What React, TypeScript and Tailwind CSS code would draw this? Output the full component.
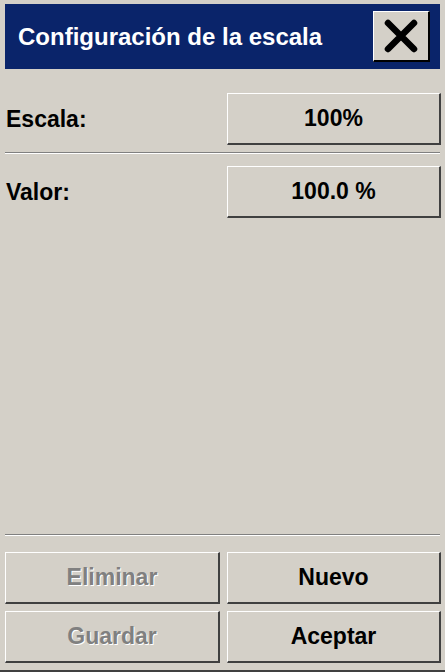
import React from "react";

function Btn({ label, disabled }: { label: string; disabled?: boolean }) {
  return (
    <button
      className={
        "h-[52px] w-full bg-[#d4d0c8] border-t border-l border-white border-b-2 border-r-2 border-b-[#404040] border-r-[#404040] text-[23px] font-bold " +
        (disabled ? "text-[#808080] [text-shadow:1px_1px_0_#ffffff]" : "text-black")
      }
    >
      {label}
    </button>
  );
}

function Separator() {
  return (
    <div className="mx-[5px] flex flex-col">
      <div className="h-px bg-[#808080]" />
      <div className="h-px bg-white" />
    </div>
  );
}

export default function App() {
  return (
    <div
      className="w-[445px] h-[672px] bg-[#d4d0c8] flex flex-col overflow-hidden"
      style={{ fontFamily: '"Liberation Sans", Arial, sans-serif' }}
    >
      {/* Title bar */}
      <div className="mt-[4px] mx-[5px] h-[65px] bg-[#0a246a] flex items-center justify-between pl-[13px] pr-[10px]">
        <span className="text-white text-[24px] font-bold">Configuración de la escala</span>
        <button className="w-[57px] h-[51px] bg-[#d4d0c8] border-t border-l border-white border-b-2 border-r-2 border-b-black border-r-black flex items-center justify-center">
          <svg width="36" height="36" viewBox="0 0 36 36">
            <path d="M5 5 L31 31 M31 5 L5 31" stroke="#000" strokeWidth="6.5" strokeLinecap="round" fill="none" />
          </svg>
        </button>
      </div>

      {/* Escala */}
      <div className="mt-[24px] flex items-center pl-[6px] pr-[4px]">
        <span className="flex-1 text-[23px] font-bold text-black">Escala:</span>
        <div className="w-[214px]">
          <Btn label="100%" />
        </div>
      </div>

      <div className="mt-[7px]">
        <Separator />
      </div>

      {/* Valor */}
      <div className="mt-[12px] flex items-center pl-[6px] pr-[4px]">
        <span className="flex-1 text-[23px] font-bold text-black">Valor:</span>
        <div className="w-[214px]">
          <Btn label="100.0 %" />
        </div>
      </div>

      <div className="flex-1" />

      <Separator />

      <div className="mt-[16px] ml-[5px] mr-[4px] grid grid-cols-[215px_214px] gap-x-[7px] gap-y-[7px]">
        <Btn label="Eliminar" disabled />
        <Btn label="Nuevo" />
        <Btn label="Guardar" disabled />
        <Btn label="Aceptar" />
      </div>

      <div className="mt-[7px] mb-0 h-[2px] bg-[#404040]" />
    </div>
  );
}
